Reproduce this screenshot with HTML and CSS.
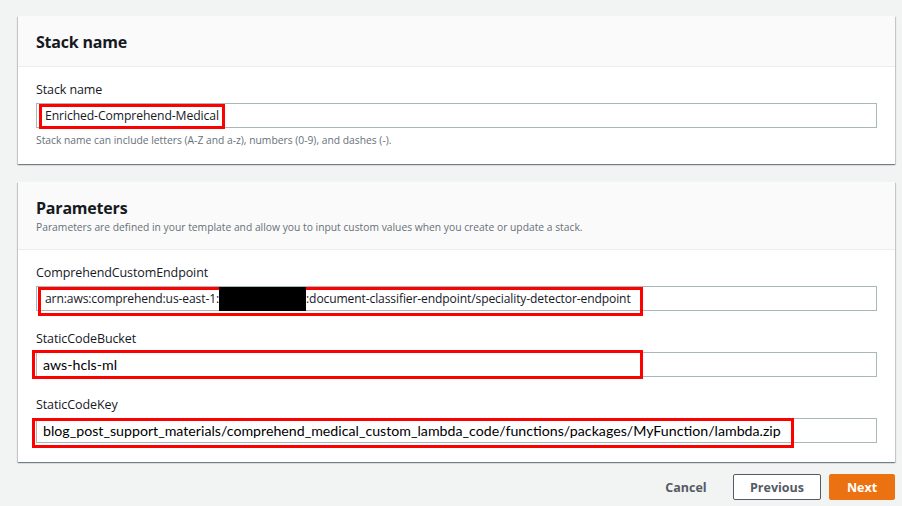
FILE: index.html
```html
<!DOCTYPE html>
<html>
<head>
<meta charset="utf-8">
<link rel="stylesheet" href="styles.css">
</head>
<body>
<div class="page">
  <section class="card card-stack">
    <div class="card-header">
      <h2 class="card-title">Stack name</h2>
    </div>
    <div class="card-body">
      <div class="field">
        <label class="field-label">Stack name</label>
        <div class="input">
          <span class="mark mark-stack"></span>
          <span class="value">Enriched-Comprehend-Medical</span>
        </div>
        <div class="hint">Stack name can include letters (A-Z and a-z), numbers (0-9), and dashes (-).</div>
      </div>
    </div>
  </section>

  <section class="card card-params">
    <div class="card-header header-tall">
      <h2 class="card-title">Parameters</h2>
      <div class="card-desc">Parameters are defined in your template and allow you to input custom values when you create or update a stack.</div>
    </div>
    <div class="card-body body-params">
      <div class="field">
        <label class="field-label">ComprehendCustomEndpoint</label>
        <div class="input">
          <span class="mark mark-arn"></span>
          <span class="value value-arn">arn:aws:comprehend:us-east-1:<span class="redact"></span>:document-classifier-endpoint/speciality-detector-endpoint</span>
        </div>
      </div>
      <div class="field">
        <label class="field-label">StaticCodeBucket</label>
        <div class="input">
          <span class="mark mark-bucket"></span>
          <span class="value value-pasted">aws-hcls-ml</span>
        </div>
      </div>
      <div class="field">
        <label class="field-label">StaticCodeKey</label>
        <div class="input">
          <span class="mark mark-key"></span>
          <span class="value value-pasted">blog_post_support_materials/comprehend_medical_custom_lambda_code/functions/packages/MyFunction/lambda.zip</span>
        </div>
      </div>
    </div>
  </section>

  <div class="actions">
    <button class="btn btn-link">Cancel</button>
    <button class="btn btn-normal">Previous</button>
    <button class="btn btn-primary">Next</button>
  </div>
</div>
</body>
</html>
```
FILE: styles.css
```css
* { box-sizing: border-box; }
html, body { margin: 0; padding: 0; }
body {
  background: #f2f3f3;
  font-family: "Open Sans", "Noto Sans", sans-serif;
  color: #16191f;
  width: 902px;
  height: 506px;
  overflow: hidden;
}
.page {
  padding: 16px 7px 0 18px;
}
.card {
  background: #fff;
  box-shadow: 0 1px 1px 0 rgba(0,28,36,.35), 1px 1px 1px 0 rgba(0,28,36,.15), -1px 1px 1px 0 rgba(0,28,36,.15);
}
.card-stack { height: 148px; }
.card-params { margin-top: 18px; height: 280px; }
.card-header {
  background: #fafafa;
  border-bottom: 1px solid #eaeded;
  height: 51px;
  padding: 16px 18px 0;
}
.header-tall { height: 68px; padding-top: 16px; }
.card-title {
  margin: 0;
  font-size: 16px;
  font-weight: 700;
  line-height: 20px;
  letter-spacing: -0.2px;
}
.card-desc {
  font-size: 10.3px;
  line-height: 14px;
  color: #687078;
  margin-top: 2px;
}
.card-body {
  padding: 14px 18px 0;
}
.body-params { padding-top: 14px; }
.field { margin-bottom: 19px; }
.field-label {
  display: block;
  font-size: 12.5px;
  line-height: 18px;
  margin-bottom: 4px;
  color: #16191f;
  letter-spacing: -0.1px;
}
.input {
  position: relative;
  height: 25px;
  width: 841px;
  border: 1px solid #aab7b8;
  background: #fff;
  display: flex;
  align-items: center;
  padding-left: 8px;
}
.value {
  position: relative;
  font-size: 12.2px;
  letter-spacing: -0.1px;
  white-space: nowrap;
  color: #16191f;
  display: flex;
  align-items: center;
}
.value-arn {
  font-size: 12.1px;
  letter-spacing: -0.12px;
}
.value-pasted {
  font-family: "Lato", "Open Sans", sans-serif;
  font-size: 14.2px;
  letter-spacing: 0;
  color: #000;
  margin-left: -2px;
}
.redact {
  display: inline-block;
  width: 87px;
  height: 24px;
  background: #000;
}
.mark {
  position: absolute;
  border: 3px solid #ff0000;
  pointer-events: none;
}
.mark-stack { left: 2px; top: 0; width: 186px; height: 25px; }
.mark-arn { left: 1px; top: 0; width: 605px; height: 29px; }
.mark-bucket { left: -5px; top: -3px; width: 611px; height: 29px; }
.mark-key { left: -5px; top: -1px; width: 762px; height: 30px; }
.hint {
  font-size: 10.3px;
  line-height: 14px;
  color: #687078;
  margin-top: 5px;
}
.actions {
  display: flex;
  justify-content: flex-end;
  align-items: center;
  margin-top: 12px;
  gap: 8px;
}
.btn {
  font-family: "Open Sans", sans-serif;
  font-size: 12.5px;
  font-weight: 700;
  height: 26px;
  border-radius: 2px;
  padding: 0;
  cursor: pointer;
}
.btn-link {
  background: transparent;
  border: none;
  color: #545b64;
  width: 78px;
}
.btn-normal {
  background: #fff;
  border: 1px solid #545b64;
  color: #545b64;
  width: 88px;
}
.btn-primary {
  background: #ec7211;
  border: 1px solid #ec7211;
  color: #fff;
  width: 66px;
}
```
